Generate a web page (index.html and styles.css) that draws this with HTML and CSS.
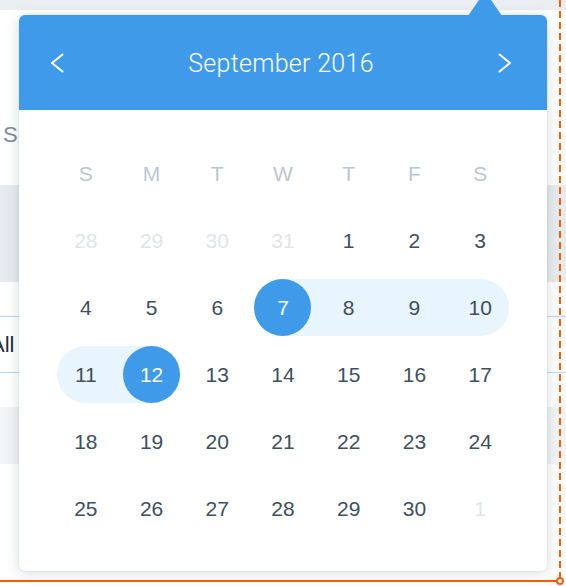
FILE: index.html
```html
<!DOCTYPE html>
<html>
<head>
<meta charset="utf-8">
<title>Date picker</title>
<link rel="stylesheet" href="styles.css">
</head>
<body>
<div class="page">
  <div class="topbar"></div>
  <div class="row-s"><span>S</span></div>
  <div class="band band-dark"></div>
  <div class="gap"></div>
  <div class="tab-row"><span class="tab">All</span></div>
  <div class="gap"></div>
  <div class="band band-light"></div>
  <div class="fill"></div>
  <div class="sel-line"></div>
</div>
<div class="guide-v"></div>
<div class="guide-dot"></div>

<div class="popup">
  <div class="arrow"></div>
  <div class="head">
    <button class="nav" aria-label="Previous month">
      <svg width="14" height="20" viewBox="0 0 14 20"><polyline points="12.5,1.5 2,10 12.5,18.5" fill="none" stroke="#fff" stroke-width="2" stroke-linecap="round" stroke-linejoin="round"/></svg>
    </button>
    <div class="title">September 2016</div>
    <button class="nav" aria-label="Next month">
      <svg width="14" height="20" viewBox="0 0 14 20"><polyline points="1.5,1.5 12,10 1.5,18.5" fill="none" stroke="#fff" stroke-width="2" stroke-linecap="round" stroke-linejoin="round"/></svg>
    </button>
  </div>
  <div class="grid">
    <div class="dow">S</div><div class="dow">M</div><div class="dow">T</div><div class="dow">W</div><div class="dow">T</div><div class="dow">F</div><div class="dow">S</div>

    <div class="d out"><span>28</span></div><div class="d out"><span>29</span></div><div class="d out"><span>30</span></div><div class="d out"><span>31</span></div><div class="d"><span>1</span></div><div class="d"><span>2</span></div><div class="d"><span>3</span></div>

    <div class="d"><span>4</span></div><div class="d"><span>5</span></div><div class="d"><span>6</span></div><div class="d r from sel"><span>7</span></div><div class="d r"><span>8</span></div><div class="d r"><span>9</span></div><div class="d r edge-r"><span>10</span></div>

    <div class="d r edge-l"><span>11</span></div><div class="d r to sel"><span>12</span></div><div class="d"><span>13</span></div><div class="d"><span>14</span></div><div class="d"><span>15</span></div><div class="d"><span>16</span></div><div class="d"><span>17</span></div>

    <div class="d"><span>18</span></div><div class="d"><span>19</span></div><div class="d"><span>20</span></div><div class="d"><span>21</span></div><div class="d"><span>22</span></div><div class="d"><span>23</span></div><div class="d"><span>24</span></div>

    <div class="d"><span>25</span></div><div class="d"><span>26</span></div><div class="d"><span>27</span></div><div class="d"><span>28</span></div><div class="d"><span>29</span></div><div class="d"><span>30</span></div><div class="d out"><span>1</span></div>
  </div>
</div>
</body>
</html>
```

FILE: styles.css
```css
* { box-sizing: border-box; margin: 0; padding: 0; }

html, body {
  width: 566px;
  height: 586px;
  overflow: hidden;
}

body {
  position: relative;
  background: #ffffff;
  font-family: "Liberation Sans", Arial, "Helvetica Neue", sans-serif;
}

/* background page */
.page {
  display: flex;
  flex-direction: column;
  height: 586px;
}

.topbar { flex: none; height: 10px; background: #eceff1; }

.row-s {
  flex: none;
  height: 175px;
  padding: 114px 0 0 3px;
  font-size: 22px;
  line-height: 22px;
  color: #7b8fa1;
}

.band { flex: none; }
.band-dark { height: 97px; background: #e6ebef; }
.band-light { height: 57px; background: #f2f4f6; }

.gap { flex: none; height: 34px; }

.tab-row {
  flex: none;
  height: 57px;
  display: flex;
  align-items: center;
  border-top: 1px solid #b6daf5;
  border-bottom: 1px solid #b6daf5;
  font-size: 22px;
  color: #1e2f3d;
}

.tab { margin-left: -10px; }

.fill { flex: 1; }

.sel-line {
  flex: none;
  width: 560px;
  height: 2px;
  margin-bottom: 4px;
  background: #ff5c00;
}

/* selection guides (overlay) */
.guide-v {
  position: absolute;
  left: 559px;
  top: 0;
  width: 2px;
  height: 580px;
  background: repeating-linear-gradient(to bottom, #ff5c00 0 7px, transparent 7px 11px);
}

.guide-dot {
  position: absolute;
  left: 556px;
  top: 577px;
  width: 8px;
  height: 8px;
  border: 2px solid #ff5c00;
  border-radius: 50%;
  background: #fff;
}

/* popup */
.popup {
  position: absolute;
  left: 19px;
  top: 15px;
  width: 528px;
  height: 556px;
  background: #fff;
  border-radius: 6px;
  box-shadow: 0 2px 14px rgba(22, 45, 61, 0.17), 0 0 3px rgba(22, 45, 61, 0.08);
}

.arrow {
  position: absolute;
  left: 449px;
  top: -15px;
  width: 34px;
  height: 16px;
  background: #3f9be9;
  clip-path: polygon(0 100%, 30% 6%, 50% -40%, 70% 6%, 100% 100%);
}

.head {
  height: 95px;
  display: flex;
  align-items: center;
  justify-content: space-between;
  padding: 0 35px 0 31px;
  background: #3f9be9;
  border-radius: 6px 6px 0 0;
  color: #fff;
}

.nav {
  display: flex;
  background: none;
  border: 0;
  cursor: pointer;
}

.title {
  font-family: Roboto, "Liberation Sans", sans-serif;
  font-size: 25px;
  font-weight: 300;
  letter-spacing: 0.3px;
  padding-top: 2px;
}

.grid {
  display: grid;
  grid-template-columns: repeat(7, 1fr);
  grid-auto-rows: 67px;
  padding: 30px 34px 0;
}

.dow, .d {
  position: relative;
  display: flex;
  align-items: center;
  justify-content: center;
}

.dow {
  font-size: 21px;
  color: #bcc6d0;
}

.d {
  font-size: 21px;
  color: #3e4f5e;
}

.d.out { color: #e0e5ea; }

.d span {
  position: relative;
  z-index: 1;
  width: 57px;
  height: 57px;
  display: flex;
  align-items: center;
  justify-content: center;
  border-radius: 50%;
}

.d.sel span {
  background: #3f9be9;
  color: #fff;
}

.d.r::before {
  content: "";
  position: absolute;
  top: 5px;
  bottom: 5px;
  left: 0;
  right: 0;
  background: #e8f5fe;
}

.d.from::before { left: 50%; }
.d.to::before { right: 50%; }

.d.edge-l::before {
  left: 4px;
  border-radius: 29px 0 0 29px;
}

.d.edge-r::before {
  right: 4px;
  border-radius: 0 29px 29px 0;
}
```
